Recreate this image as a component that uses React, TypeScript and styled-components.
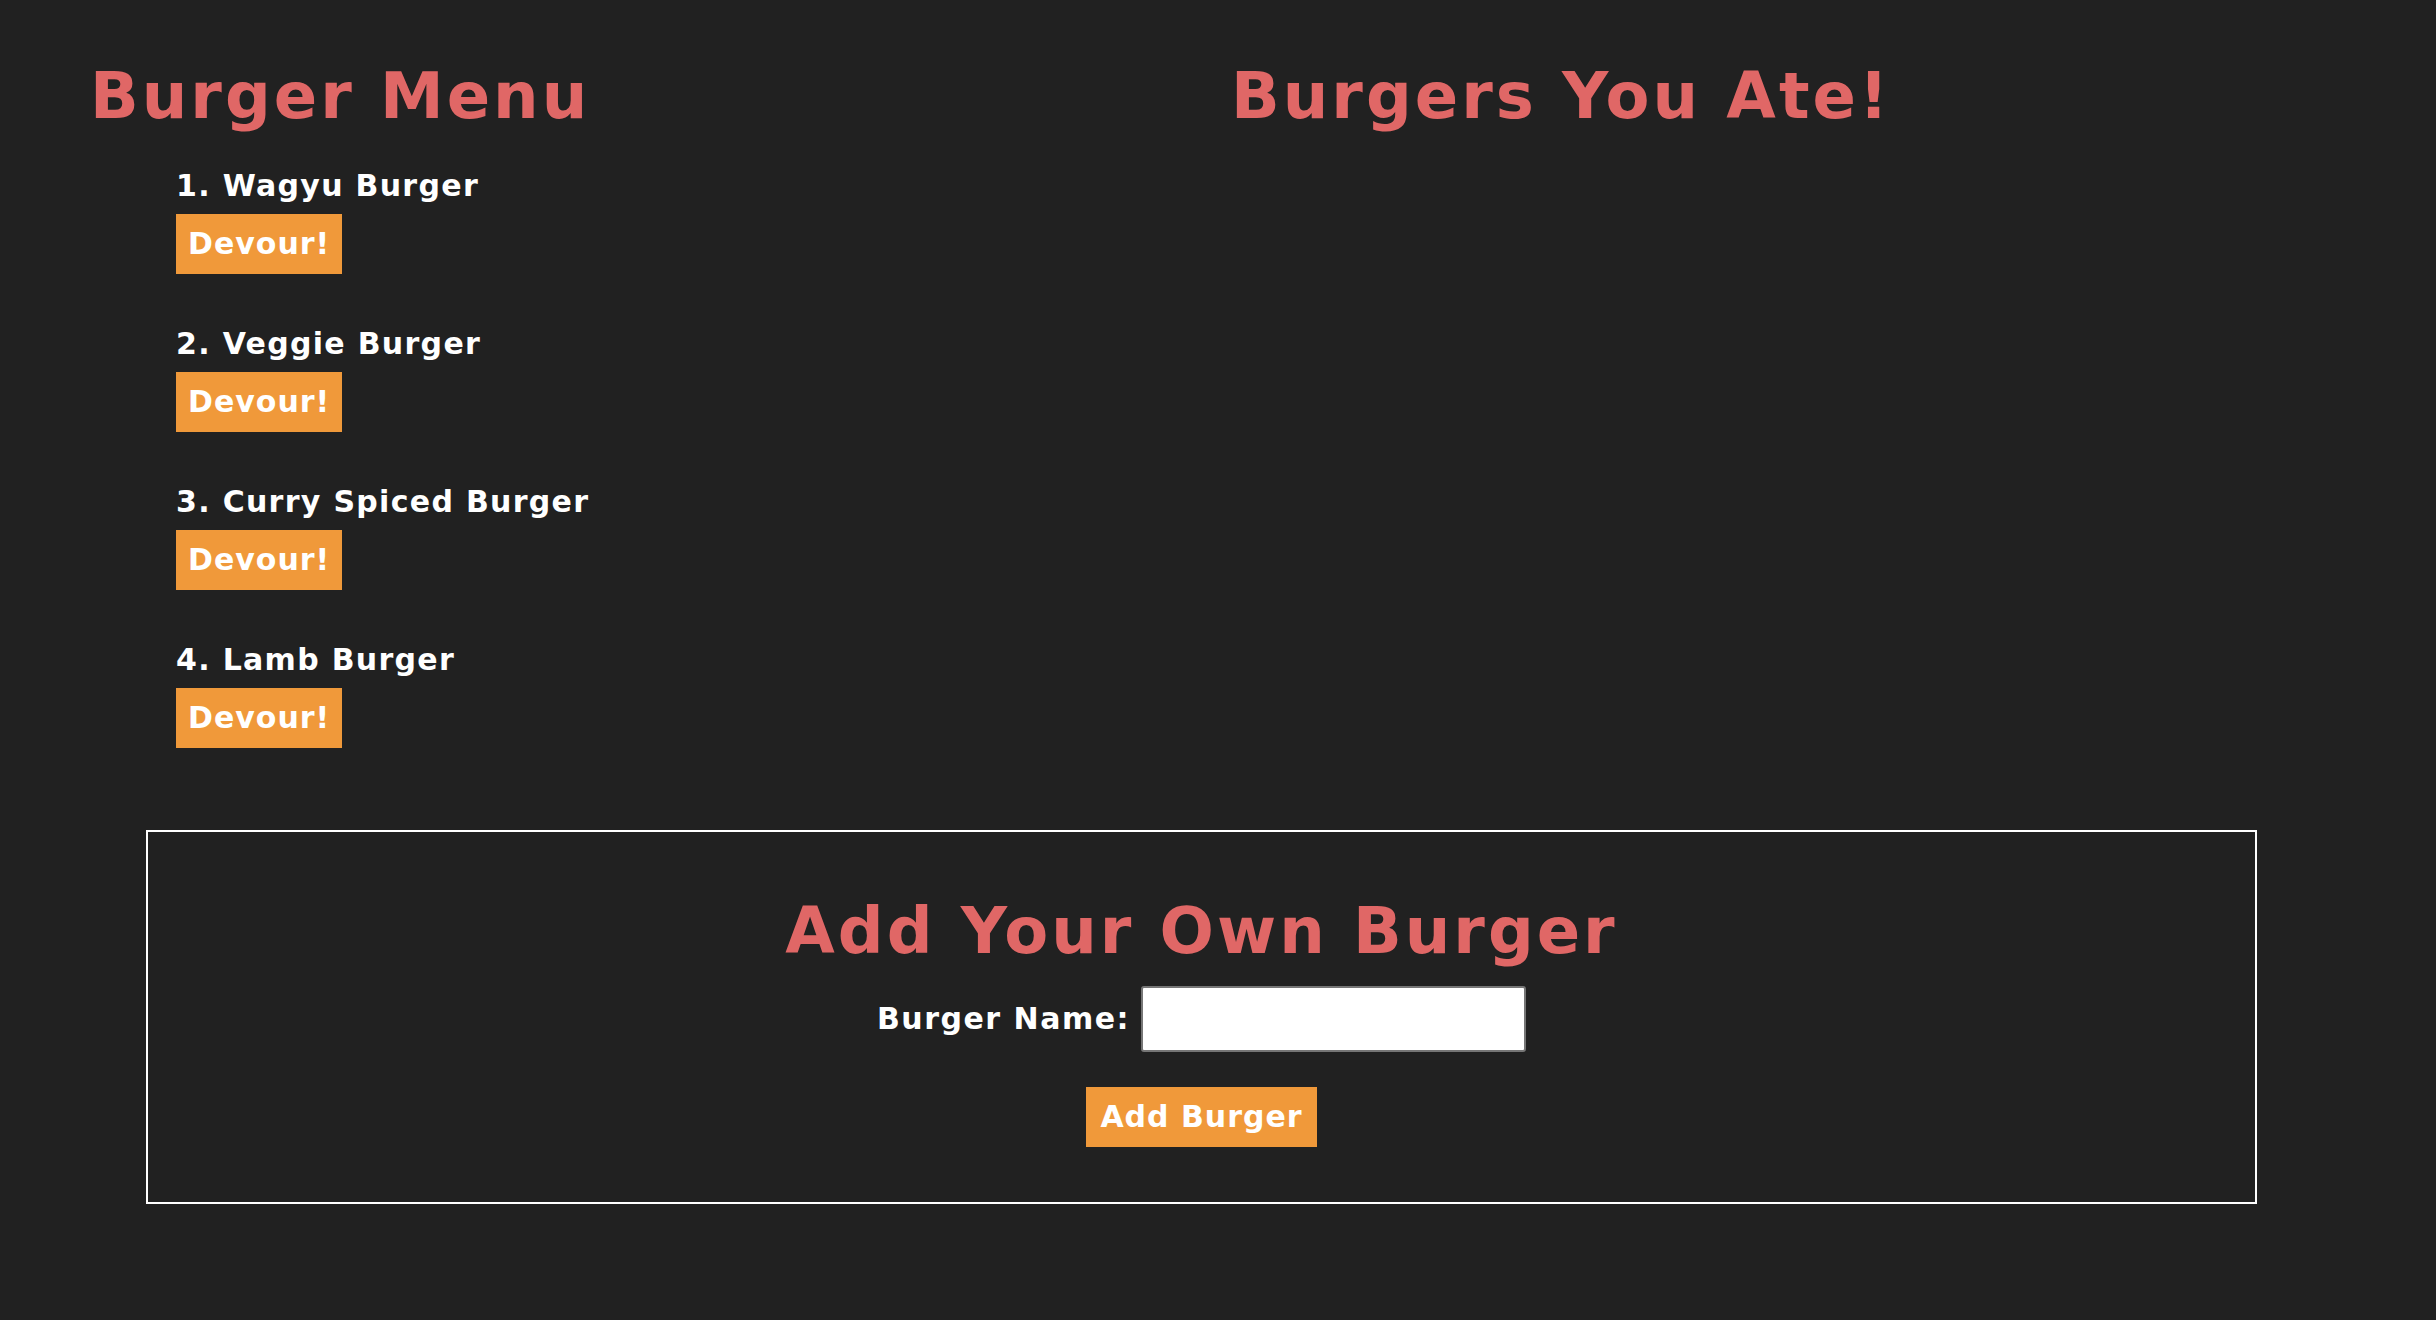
import styled, { createGlobalStyle } from 'styled-components'

const GlobalStyle = createGlobalStyle`
  html, body {
    margin: 0;
    padding: 0;
    background: #212121;
  }
  body {
    font-family: "DejaVu Sans", "Liberation Sans", sans-serif;
    font-weight: bold;
    color: #ffffff;
  }
`

const burgers = ['Wagyu Burger', 'Veggie Burger', 'Curry Spiced Burger', 'Lamb Burger']

const Page = styled.main`
  min-height: 1320px;
  padding-top: 64px;
  box-sizing: border-box;
`

const Columns = styled.section`
  display: grid;
  grid-template-columns: 1141px 1fr;
  padding-left: 90px;
`

const Heading = styled.h1`
  margin: 0;
  font-size: 64px;
  line-height: 64px;
  letter-spacing: 3px;
  color: #e06766;
  font-weight: bold;
`

const MenuList = styled.ul`
  list-style: none;
  margin: 40px 0 0;
  padding: 0 0 0 86px;
  display: flex;
  flex-direction: column;
  gap: 52px;
`

const MenuItem = styled.li`
  display: flex;
  flex-direction: column;
  align-items: flex-start;
  gap: 10px;
`

const ItemName = styled.span`
  font-size: 30px;
  line-height: 36px;
  letter-spacing: 1.3px;
`

const OrangeButton = styled.button`
  border: none;
  margin: 0;
  background: #f0993a;
  color: #ffffff;
  font-family: inherit;
  font-weight: bold;
  font-size: 30px;
  line-height: 60px;
  height: 60px;
  letter-spacing: 1px;
  padding: 0 ${props => props.$pad}px;
  cursor: pointer;
`

const FormBox = styled.form`
  margin: 82px 0 0 146px;
  width: 2111px;
  box-sizing: border-box;
  border: 2px solid #ffffff;
  padding: 67px 0 55px;
  display: flex;
  flex-direction: column;
  align-items: center;
`

const FieldRow = styled.div`
  display: flex;
  align-items: center;
  gap: 11px;
  margin: 23px 0 35px;
`

const Label = styled.label`
  font-size: 30px;
  line-height: 36px;
  letter-spacing: 1.5px;
`

const NameInput = styled.input`
  width: 385px;
  height: 66px;
  box-sizing: border-box;
  border: 2px solid #767676;
  border-radius: 3px;
  background: #ffffff;
  padding: 0 8px;
  font-size: 28px;
  font-family: inherit;
`

export default function App() {
  return (
    <>
      <GlobalStyle />
      <Page>
        <Columns>
          <div>
            <Heading>Burger Menu</Heading>
            <MenuList>
              {burgers.map((name, i) => (
                <MenuItem key={name}>
                  <ItemName>{i + 1}. {name}</ItemName>
                  <OrangeButton type="button" $pad={12}>Devour!</OrangeButton>
                </MenuItem>
              ))}
            </MenuList>
          </div>
          <div>
            <Heading>Burgers You Ate!</Heading>
          </div>
        </Columns>
        <FormBox onSubmit={e => e.preventDefault()}>
          <Heading>Add Your Own Burger</Heading>
          <FieldRow>
            <Label htmlFor="burger-name">Burger Name:</Label>
            <NameInput id="burger-name" type="text" />
          </FieldRow>
          <OrangeButton type="submit" $pad={14}>Add Burger</OrangeButton>
        </FormBox>
      </Page>
    </>
  )
}
